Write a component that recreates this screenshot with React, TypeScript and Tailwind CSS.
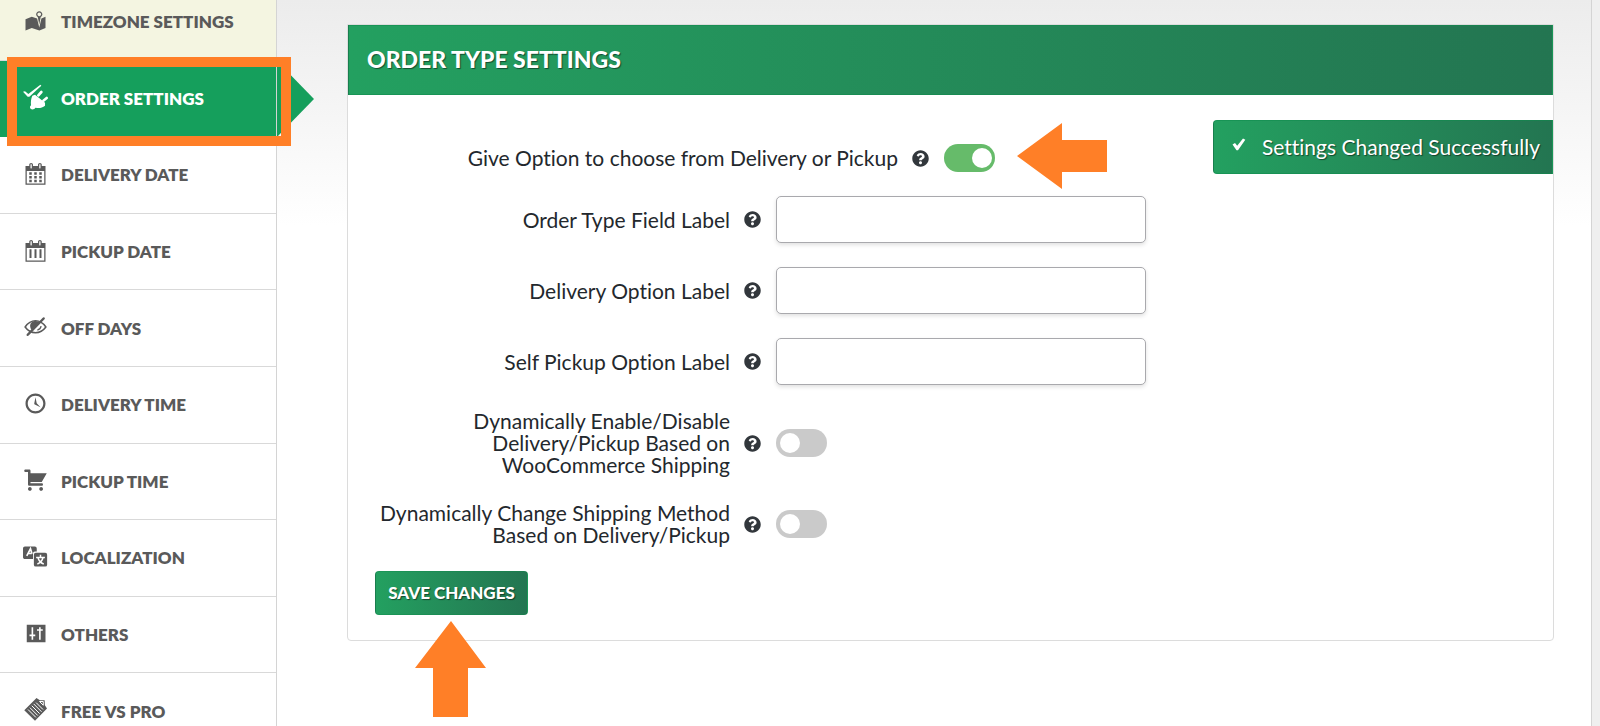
import type { ReactNode } from "react";
import { FaQuestionCircle } from "react-icons/fa";

const PinMapIcon = () => (
  <path d="M13 13.14l1.17-5.94c.79-.43 1.33-1.25 1.33-2.2 0-1.38-1.12-2.5-2.5-2.5S10.5 3.62 10.5 5c0 .95.54 1.77 1.33 2.2zm0-9.64c.83 0 1.5.67 1.5 1.5s-.67 1.5-1.5 1.5-1.5-.67-1.5-1.5.67-1.5 1.5-1.5zm1.72 4.8L18 6.97v9L13.12 18 7 15.97l-5 2v-9l5-2 4.27 1.41 1.73 7.3z" />
);

const PlugIcon = () => (
  <g transform="scale(0.267)">
    <path d="M0 23l6-1 10 8L52 2l3 3L19 38l-5 0z" />
    <path d="M46 34L55 24M61 50L71 42" fill="none" stroke="currentColor" strokeWidth="8" strokeLinecap="round" />
    <path d="M28 35l8-3 30 24 0 9c-7 6-16 8-23 7l-6-1c-3 7-16 7-16-1 0-3 1-4 3-6-1-11 0-20 4-29z" />
  </g>
);

const calendarFrame =
  "M15 4h3v15H2V4h3V3c0-.41.15-.76.44-1.06.29-.29.65-.44 1.06-.44s.77.15 1.06.44c.29.3.44.65.44 1.06v1h4V3c0-.41.15-.76.44-1.06.29-.29.65-.44 1.06-.44s.77.15 1.06.44c.29.3.44.65.44 1.06v1zM6 3v2.5c0 .14.05.26.15.36.09.09.21.14.35.14s.26-.05.35-.14c.1-.1.15-.22.15-.36V3c0-.14-.05-.26-.15-.35-.09-.1-.21-.15-.35-.15s-.26.05-.35.15c-.1.09-.15.21-.15.35zm7 0v2.5c0 .14.05.26.14.36.1.09.22.14.36.14s.26-.05.36-.14c.09-.1.14-.22.14-.36V3c0-.14-.05-.26-.14-.35-.1-.1-.22-.15-.36-.15s-.26.05-.36.15c-.09.09-.14.21-.14.35zm4 15V8H3v10h14z";

const CalendarGridIcon = () => (
  <>
    <path d={calendarFrame} />
    <path d="M7 9v2H5V9h2zm2 0h2v2H9V9zm4 2V9h2v2h-2zm-6 1v2H5v-2h2zm2 0h2v2H9v-2zm4 2v-2h2v2h-2zm-6 1v2H5v-2h2zm4 2H9v-2h2v2zm4 0h-2v-2h2v2z" />
  </>
);

const CalendarBarsIcon = () => (
  <>
    <path d={calendarFrame} />
    <path d="M5.2 9h1.6v7H5.2zM9.2 9h1.6v7H9.2zM13.2 9h1.6v7h-1.6z" />
  </>
);

const HiddenIcon = () => (
  <>
    <path d="M1.7 10.4C4 7 7 5.4 10 5.4s6 1.6 8.3 5c-2.3 3.2-5.3 4.6-8.3 4.6s-6-1.4-8.3-4.6z" fill="none" stroke="currentColor" strokeWidth="1.2" />
    <path d="M10 5.5c-2.6 0-4.3 1.7-4.3 3.9 0 1.8.8 3.2 1.9 3.9l5.6-6.3c-.7-.9-1.7-1.5-3.2-1.5z" />
    <path d="M11.5 12.9c1.5-.4 2.7-1.6 3-3.2" fill="none" stroke="currentColor" strokeWidth="1" />
    <path d="M3.8 16.6L16.5 3.6" stroke="currentColor" strokeWidth="2" strokeLinecap="round" />
  </>
);

const ClockIcon = () => (
  <path d="M10 2c4.42 0 8 3.58 8 8s-3.58 8-8 8-8-3.58-8-8 3.58-8 8-8zm0 14.2c3.42 0 6.2-2.78 6.2-6.2S13.42 3.8 10 3.8 3.8 6.58 3.8 10s2.78 6.2 6.2 6.2zm-.71-5.49c.07.05.14.1.23.15l-.02.02L14 13l-3.03-3.19L10 5l-.97 4.81h.01c0 .02-.01.05-.02.09S9 9.97 9 10c0 .28.1.52.29.71z" />
);

const CartIcon = () => (
  <path d="M6 13h9c.55 0 1 .45 1 1s-.45 1-1 1H5c-.55 0-1-.45-1-1V4H2c-.55 0-1-.45-1-1s.45-1 1-1h3c.55 0 1 .45 1 1v2h13l-4 7H6v1zm-.5 3c.83 0 1.5.67 1.5 1.5S6.33 19 5.5 19 4 18.33 4 17.5 4.67 16 5.5 16zm9 0c.83 0 1.5.67 1.5 1.5s-.67 1.5-1.5 1.5-1.5-.67-1.5-1.5.67-1.5 1.5-1.5z" />
);

const TranslateIcon = () => (
  <>
    <path d="M1.500 2h8c.8 0 1.500.7 1.500 1.500V6H9.500C8.700 6 8 6.700 8 7.500V12H1.500C.7 12 0 11.300 0 10.500v-7C0 2.700.7 2 1.500 2z" />
    <path d="M3 9.5L6 3.800l1.200 4M4 7.600h3" fill="none" stroke="#fff" strokeWidth="1.3" />
    <rect x="8.7" y="7" width="10.6" height="11" rx="1.5" />
    <path d="M14 8.500v2M10.500 10.700h7M11.500 16c2.500-1 4-2.800 4.500-5.200M12 11c.6 2.300 2.200 4.100 4.600 5" fill="none" stroke="#fff" strokeWidth="1.2" />
  </>
);

const SlidersIcon = () => (
  <>
    <path d="M3 3h15v14H3z" />
    <path d="M7.5 5v10M13.5 5v10M5.2 11.5h4.6M11.2 7.2h4.6" fill="none" stroke="#fff" strokeWidth="1.3" />
  </>
);

const TicketIcon = () => (
  <>
    <path d="M10.8.8l2.7 1.7 3.8 0 .2 4 1.7 2.7L9.6 19 1 10.5z" />
    <path d="M4 10l6.300 6.300M5.500 8.500l6.300 6.300M7 7l6.300 6.300M8.500 5.500l6.300 6.300M10.500 4.500l5.500 5.500" fill="none" stroke="#fff" strokeWidth=".8" />
    <path d="M13.2 3.6h3v3z" fill="none" stroke="#fff" strokeWidth=".8" />
  </>
);

const menu: { label: string; icon: ReactNode; state?: "hover" | "active" }[] = [
  { label: "TIMEZONE SETTINGS", icon: <PinMapIcon />, state: "hover" },
  { label: "ORDER SETTINGS", icon: <PlugIcon />, state: "active" },
  { label: "DELIVERY DATE", icon: <CalendarGridIcon /> },
  { label: "PICKUP DATE", icon: <CalendarBarsIcon /> },
  { label: "OFF DAYS", icon: <HiddenIcon /> },
  { label: "DELIVERY TIME", icon: <ClockIcon /> },
  { label: "PICKUP TIME", icon: <CartIcon /> },
  { label: "LOCALIZATION", icon: <TranslateIcon /> },
  { label: "OTHERS", icon: <SlidersIcon /> },
  { label: "FREE VS PRO", icon: <TicketIcon /> },
];

const rowStyle = {
  normal: "border-[#d9d9d9] bg-white text-[#5a5a5a]",
  hover: "border-[#d9d9d9] bg-[#f4f5e1] text-[#5a5a5a]",
  active: "border-[#159f5c] bg-[#159f5c] text-white",
};

function Sidebar() {
  return (
    <nav className="-mt-4 grid h-[766px] w-[277px] shrink-0 auto-rows-fr border-r border-[#d4d4d4]">
      {menu.map((item) => (
        <a
          key={item.label}
          href="#"
          className={`relative flex items-center gap-[13px] border-b pl-[23px] text-[17px] leading-none font-extrabold ${rowStyle[item.state ?? "normal"]}`}
        >
          <svg viewBox="0 0 20 20" className="mb-[3px] size-[25px] shrink-0 overflow-visible" fill="currentColor" aria-hidden="true">
            {item.icon}
          </svg>
          {item.label}
          {item.state === "active" && (
            <>
              <svg viewBox="0 0 37 76" className="absolute top-0 left-[277px] h-[76px] w-[37px]" fill="#159f5c" aria-hidden="true">
                <path d="M0 0L37 38 0 76z" />
              </svg>
              <span className="absolute -top-1 left-[7px] z-10 h-[89px] w-[284px] border-[10px] border-[#ff7f27]" />
            </>
          )}
        </a>
      ))}
    </nav>
  );
}

function Help({ about }: { about: string }) {
  return (
    <button type="button" aria-label={`Help: ${about}`} className="shrink-0 text-[#32373c]">
      <FaQuestionCircle size={17} />
    </button>
  );
}

function Toggle({ id, on }: { id: string; on?: boolean }) {
  return (
    <input
      id={id}
      type="checkbox"
      defaultChecked={on}
      className="relative h-7 w-[51px] shrink-0 appearance-none rounded-full bg-[#cacaca] before:absolute before:top-1 before:left-1 before:size-5 before:rounded-full before:bg-white checked:bg-[#66bb6a] checked:before:left-7"
    />
  );
}

function Field({ id, label, children }: { id: string; label: string[]; children: ReactNode }) {
  return (
    <div className="flex items-center">
      <label htmlFor={id} className="w-[355px] shrink-0 py-px text-right">
        {label.map((line) => (
          <span key={line} className="block whitespace-nowrap">
            {line}
          </span>
        ))}
      </label>
      <div className="flex items-center gap-[15px] pl-[14px]">
        <Help about={label.join(" ")} />
        {children}
      </div>
    </div>
  );
}

const textFields = [
  { id: "order-type", label: "Order Type Field Label" },
  { id: "delivery-option", label: "Delivery Option Label" },
  { id: "pickup-option", label: "Self Pickup Option Label" },
];

export default function App() {
  return (
    <div className="flex h-screen overflow-hidden bg-[#efefef] font-['Lato',sans-serif] [font-variant-ligatures:none]">
      <Sidebar />
      <main className="min-w-0 flex-1 border-r border-[#d4d4d4] bg-white bg-linear-to-b from-[#ececec] to-white to-[225px] pt-6 pr-[37px] pl-[70px]">
        <section className="relative rounded-b border border-[#dcdcdc] bg-white">
          <h1 className="flex h-[70px] items-center border border-[#0e8a4c]/50 bg-linear-to-r from-[#23a060] to-[#237551] pb-0.5 pl-[18px] text-[23px] leading-none font-black text-white [text-shadow:1px_1px_1px_rgba(0,0,0,0.5)]">
            ORDER TYPE SETTINGS
          </h1>

          <div
            role="status"
            className="absolute top-[95px] right-0 flex h-[54px] w-[340px] items-center justify-end gap-4 rounded-l border border-[#0e8a4c]/50 bg-linear-to-r from-[#23a060] to-[#237551] pr-3 pb-0.5 text-[21px] leading-none text-white [text-shadow:1px_1px_1px_rgba(0,0,0,0.5)]"
          >
            <svg viewBox="0 0 14 13" className="mb-1 h-[13px] w-[14px]" fill="#fff" aria-hidden="true">
              <path d="M.5 6.5L3 5l2.200 2.800L11 .5l2.300 1.200L6 12.300H4.500z" />
            </svg>
            Settings Changed Successfully
          </div>

          <form className="flex flex-col gap-6 px-[27px] pt-[49px] pb-[25px] text-[21px] leading-[22px] text-[#23282d]" onSubmit={(e) => e.preventDefault()}>
            <div className="relative flex items-center">
              <label htmlFor="choose" className="w-[523px] text-right whitespace-nowrap">
                Give Option to choose from Delivery or Pickup
              </label>
              <div className="flex items-center gap-[15px] pl-[14px]">
                <Help about="Delivery or Pickup" />
                <Toggle id="choose" on />
              </div>
              <svg viewBox="0 0 90 66" className="absolute -top-[21px] left-[642px] h-[66px] w-[90px]" fill="#ff7f27" aria-hidden="true">
                <path d="M0 33L45 0V17H90V49H45V66z" />
              </svg>
            </div>

            {textFields.map((f) => (
              <Field key={f.id} id={f.id} label={[f.label]}>
                <input id={f.id} type="text" className="h-[47px] w-[370px] rounded-[5px] border border-[#a9a9ad] bg-white px-3 shadow-[0_2px_4px_rgba(0,0,0,0.12)]" />
              </Field>
            ))}

            <Field id="dynamic-enable" label={["Dynamically Enable/Disable", "Delivery/Pickup Based on", "WooCommerce Shipping"]}>
              <Toggle id="dynamic-enable" />
            </Field>
            <Field id="dynamic-change" label={["Dynamically Change Shipping Method", "Based on Delivery/Pickup"]}>
              <Toggle id="dynamic-change" />
            </Field>

            <div className="relative flex">
              <button
                type="submit"
                className="h-11 w-[153px] rounded border border-[#0e8a4c]/40 bg-linear-to-r from-[#23a060] to-[#237551] pb-0.5 text-[17px] leading-none font-black whitespace-nowrap text-white [text-shadow:1px_1px_1px_rgba(0,0,0,0.5)]"
              >
                SAVE CHANGES
              </button>
              <svg viewBox="0 0 71 96" className="absolute top-[50px] left-10 z-10 h-24 w-[71px]" fill="#ff7f27" aria-hidden="true">
                <path d="M36 0L71 47H53V96H18V47H0z" />
              </svg>
            </div>
          </form>
        </section>
      </main>
      <div className="w-2 shrink-0" />
    </div>
  );
}
